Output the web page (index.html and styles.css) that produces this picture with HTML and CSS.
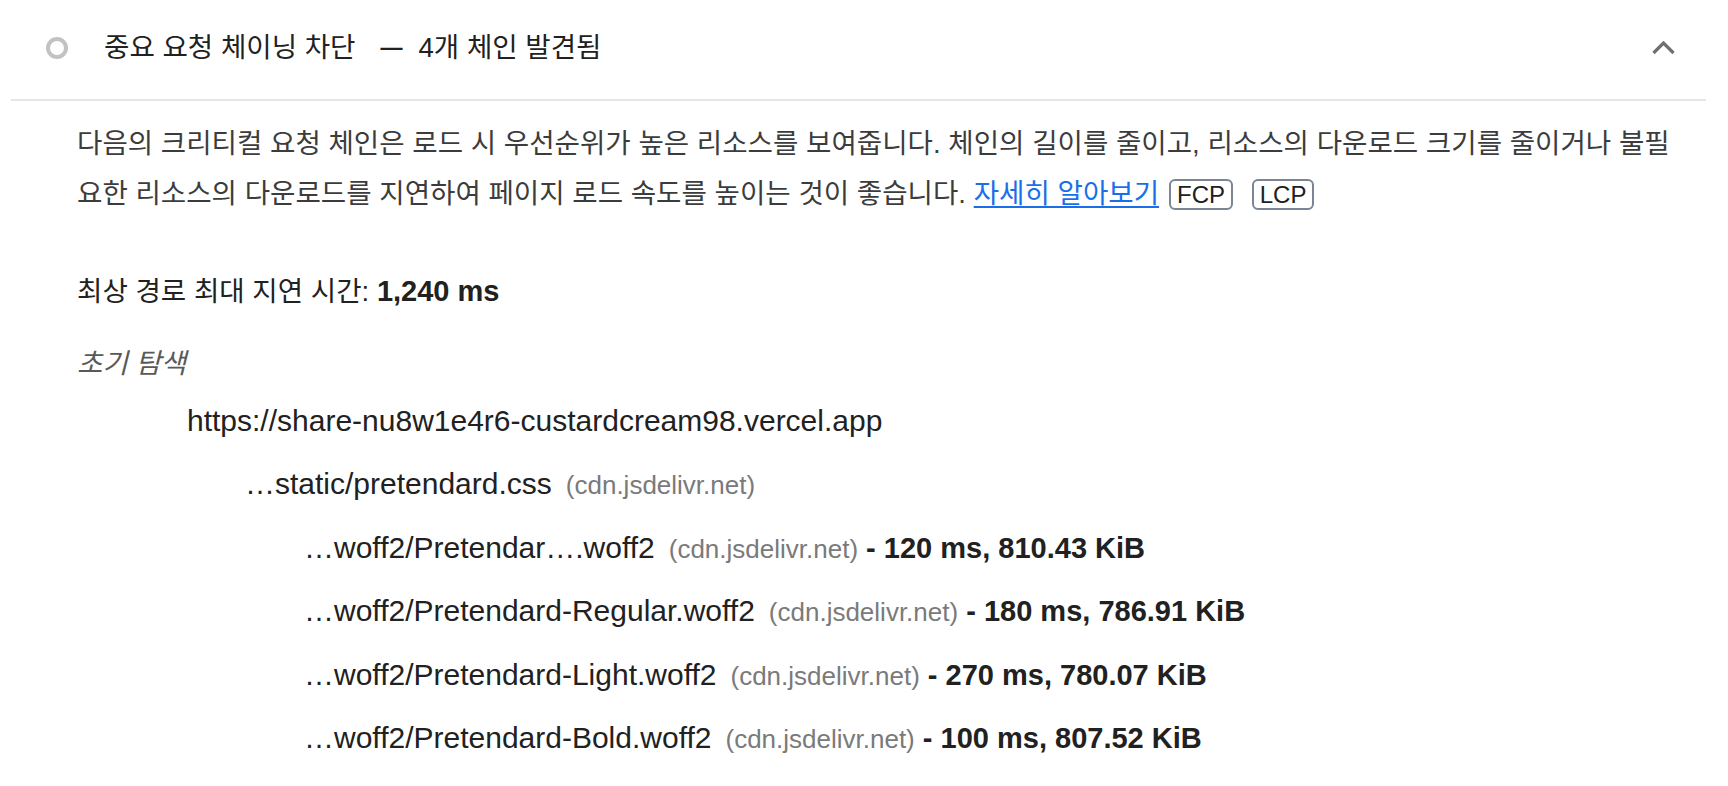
FILE: index.html
```html
<!DOCTYPE html>
<html lang="ko">
<head>
<meta charset="utf-8">
<title>중요 요청 체이닝 차단</title>
<link rel="stylesheet" href="styles.css">
</head>
<body>
<div class="audit">
  <div class="audit-header">
    <span class="score-icon"></span>
    <span class="audit-title ko">중요 요청 체이닝 차단</span>
    <span class="dash">—</span>
    <span class="display-text ko">4개 체인 발견됨</span>
    <svg class="chevron" width="23" height="14" viewBox="0 0 23 14"><polyline points="1.5,12 11.5,2 21.5,12" fill="none" stroke="#6f6f6f" stroke-width="3.2"/></svg>
  </div>
  <div class="audit-body">
    <p class="desc ko">다음의 크리티컬 요청 체인은 로드 시 우선순위가 높은 리소스를 보여줍니다. 체인의 길이를 줄이고, 리소스의 다운로드 크기를 줄이거나 불필요한 리소스의 다운로드를 지연하여 페이지 로드 속도를 높이는 것이 좋습니다. <a class="link" href="#">자세히 알아보기</a><span class="adorn">FCP</span> <span class="adorn">LCP</span></p>
    <div class="crc">
      <div class="summary"><span class="ko">최상 경로 최대 지연 시간: </span><span class="value">1,240 ms</span></div>
      <div class="initial-nav ko">초기 탐색</div>
      <div class="node lvl0">https://share-nu8w1e4r6-custardcream98.vercel.app</div>
      <div class="node lvl1">…static/pretendard.css<span class="host">(cdn.jsdelivr.net)</span></div>
      <div class="node lvl2">…woff2/Pretendar….woff2<span class="host">(cdn.jsdelivr.net)</span><span class="dur"> - 120 ms, 810.43 KiB</span></div>
      <div class="node lvl2">…woff2/Pretendard-Regular.woff2<span class="host">(cdn.jsdelivr.net)</span><span class="dur"> - 180 ms, 786.91 KiB</span></div>
      <div class="node lvl2">…woff2/Pretendard-Light.woff2<span class="host">(cdn.jsdelivr.net)</span><span class="dur"> - 270 ms, 780.07 KiB</span></div>
      <div class="node lvl2">…woff2/Pretendard-Bold.woff2<span class="host">(cdn.jsdelivr.net)</span><span class="dur"> - 100 ms, 807.52 KiB</span></div>
    </div>
  </div>
</div>
</body>
</html>
```

FILE: styles.css
```css
html, body {
  margin: 0;
  padding: 0;
  background: #ffffff;
}

body {
  font-family: "Liberation Sans", "Noto Sans CJK KR", sans-serif;
  color: #212121;
  font-size: 30px;
}

.ko {
  font-size: 27.6px;
}

.audit {
  margin-left: 11px;
  width: 1695px;
}

.audit-header {
  display: flex;
  align-items: center;
  height: 101px;
  padding-left: 35px;
  padding-right: 31px;
  padding-bottom: 4px;
  border-bottom: 2px solid #e6e6e6;
  box-sizing: border-box;
  line-height: 50px;
}

.score-icon {
  width: 22px;
  height: 22px;
  box-sizing: border-box;
  border: 4.5px solid #c2c2c2;
  border-radius: 50%;
  flex: none;
  margin-right: 36px;
}

.audit-title {
  color: #212121;
}

.dash {
  font-size: 22px;
  font-weight: 700;
  margin-left: 25px;
  margin-right: 16px;
  color: #212121;
}

.display-text {
  color: #212121;
}

.chevron {
  margin-left: auto;
  flex: none;
}

.audit-body {
  padding: 18px 26px 0 66px;
}

.desc {
  margin: 0;
  line-height: 50px;
  color: #3c3c3c;
}

.link {
  color: #1a6fe8;
  text-decoration: underline;
  text-decoration-thickness: 2px;
  text-underline-offset: 3px;
}

.adorn {
  display: inline-block;
  font-size: 24px;
  line-height: 27px;
  padding: 0 6px;
  margin: 0 5px 0 10px;
  border: 2px solid #7b8594;
  border-radius: 6px;
  color: #212121;
}

.adorn + .adorn {
  margin-left: 6px;
}

.crc {
  margin-top: 47px;
}

.summary {
  line-height: 50px;
  margin-bottom: 22px;
}

.summary .value {
  font-size: 29px;
  font-weight: 700;
}

.initial-nav {
  line-height: 50px;
  font-style: italic;
  color: #595959;
}

.node {
  line-height: 63.4px;
  height: 63.4px;
  white-space: nowrap;
}

.lvl0 { padding-left: 110px; }
.lvl1 { padding-left: 168px; }
.lvl2 { padding-left: 227px; }

.host {
  font-size: 26px;
  margin-left: 14px;
  color: #7a7a7a;
}

.dur {
  font-size: 29px;
  font-weight: 700;
}
```
